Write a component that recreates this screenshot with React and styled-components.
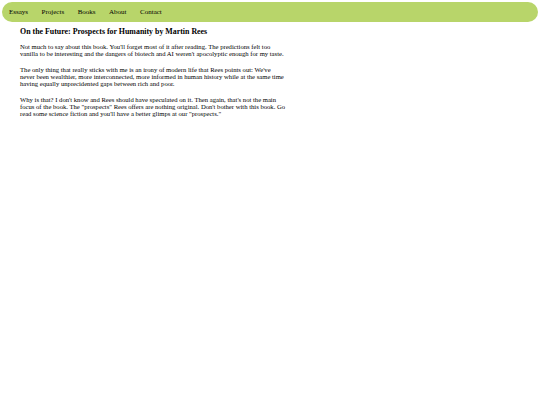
import styled, { createGlobalStyle } from "styled-components";

const GlobalStyle = createGlobalStyle`
  html, body {
    margin: 0;
    padding: 0;
    background: #ffffff;
  }
  body {
    font-family: "Liberation Serif", "Times New Roman", serif;
    font-size: 6.65px;
    color: #000000;
  }
`;

const Page = styled.div`
  padding: 2px;
`;

const NavBar = styled.nav`
  display: flex;
  align-items: center;
  gap: 13.5px;
  height: 20px;
  padding: 0 7px;
  background: #b8d56a;
  border-radius: 10px;
  font-size: 7px;
`;

const NavLink = styled.a`
  color: #000000;
  text-decoration: none;
`;

const Article = styled.article`
  width: 265.4px;
  padding: 5px 0 0 18px;
`;

const Title = styled.h1`
  margin: 0 0 7px;
  font-size: 7.9px;
  font-weight: bold;
`;

const Paragraph = styled.p`
  margin: 0 0 9px;
  line-height: 7px;
`;

const links = ["Essays", "Projects", "Books", "About", "Contact"];

export default function App() {
  return (
    <Page>
      <GlobalStyle />
      <NavBar>
        {links.map((l) => (
          <NavLink key={l} href="#">
            {l}
          </NavLink>
        ))}
      </NavBar>
      <Article>
        <Title>On the Future: Prospects for Humanity by Martin Rees</Title>
        <Paragraph>
          Not much to say about this book. You'll forget most of it after
          reading. The predictions felt too vanilla to be interesting and the
          dangers of biotech and AI weren't apocolyptic enough for my taste.
        </Paragraph>
        <Paragraph>
          The only thing that really sticks with me is an irony of modern life
          that Rees points out: We've never been wealthier, more
          interconnected, more informed in human history while at the same time
          having equally unprecidented gaps between rich and poor.
        </Paragraph>
        <Paragraph>
          Why is that? I don't know and Rees should have speculated on it. Then
          again, that's not the main focus of the book. The "prospects" Rees
          offers are nothing original. Don't bother with this book. Go read
          some science fiction and you'll have a better glimps at our
          "prospects."
        </Paragraph>
      </Article>
    </Page>
  );
}
